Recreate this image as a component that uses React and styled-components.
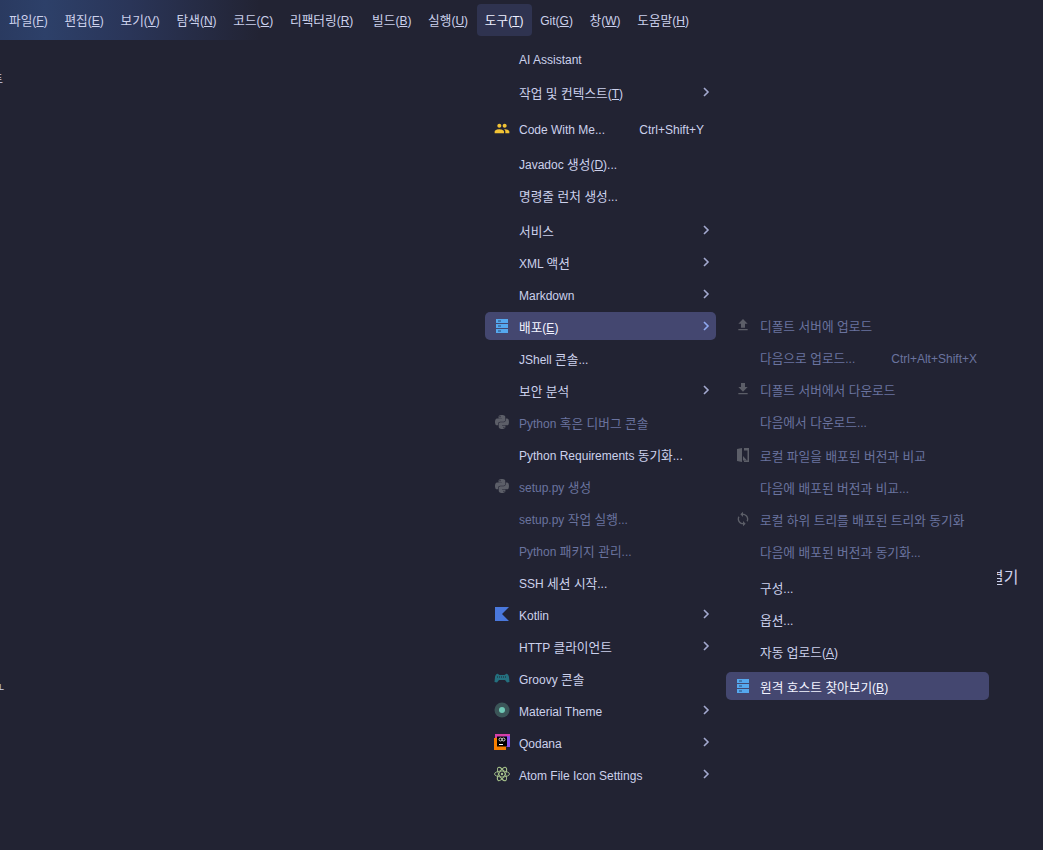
import React from "react";
import styled, { createGlobalStyle } from "styled-components";
import { MdPeople, MdFileUpload, MdFileDownload, MdSync } from "react-icons/md";
import { FaPython } from "react-icons/fa";

const textColor = "#ccd1ec";
const dimColor = "#6a739f";

const GlobalStyle = createGlobalStyle`
    html, body {
        margin: 0;
        background: #222333;
    }
    body {
        font-family: "Liberation Sans", "Noto Sans CJK KR", sans-serif;
        font-size: 12px;
        color: ${textColor};
    }
`;

const Page = styled.div`
    position: relative;
    width: 1043px;
    height: 850px;
    overflow: hidden;
    background: #222333;
`;

const MenuBar = styled.div`
    display: flex;
    align-items: center;
    height: 40px;
    padding-left: 1px;
    background: linear-gradient(90deg, #2a3a60 0%, #2d4069 45px, #2a3558 130px, #222333 260px);
`;

const BarItem = styled.div`
    height: 32px;
    line-height: 35px;
    padding: 0 8px;
    margin-right: 0.7px;
    border-radius: 4px;
    white-space: nowrap;
    background: ${({ $active }) => ($active ? "#2f3350" : "transparent")};
    color: ${({ $active }) => ($active ? "#eef0ff" : textColor)};

    &:nth-child(6) {
        margin-right: 2.7px;
    }
`;

const Hangul = styled.span`
    font-size: 12.7px;
    line-height: 0;
`;

const BackText = styled.span`
    position: absolute;
    left: ${({ $x }) => $x}px;
    top: ${({ $y }) => $y}px;
    color: ${textColor};
    font-size: ${({ $size }) => $size}px;
    line-height: 1;
`;

const Menu = styled.div`
    position: absolute;
    left: ${({ $x }) => $x}px;
    top: ${({ $y }) => $y}px;
    width: ${({ $w }) => $w}px;
    display: flex;
    flex-direction: column;
    padding: 0 8px;
    box-sizing: border-box;
    background: #222333;
`;

const Row = styled.div`
    display: flex;
    align-items: center;
    flex: none;
    height: 28px;
    margin: ${({ $gap }) => 2 + ($gap || 0)}px 0 2px;
    padding: 0 12px 0 9px;
    border-radius: 5px;
    white-space: nowrap;
    background: ${({ $selected }) => ($selected ? "#444770" : "transparent")};
    color: ${({ $selected, $disabled }) =>
        $selected ? "#f2f3ff" : $disabled ? dimColor : textColor};
`;

const IconSlot = styled.span`
    display: flex;
    align-items: center;
    justify-content: center;
    flex: none;
    width: 16px;
    height: 16px;
    margin-right: 9px;
    color: ${({ $color }) => $color || "#5c5e68"};
`;

const Label = styled.span`
    flex: 1;
    line-height: 16px;
    padding-top: 4px;
`;

const Shortcut = styled.span`
    line-height: 16px;
    padding-top: 4px;
    color: ${({ $disabled }) => ($disabled ? dimColor : textColor)};
`;

const Chevron = styled.svg`
    flex: none;
    width: 8px;
    height: 10px;
    margin-right: -6px;
    fill: none;
    stroke: ${({ $selected }) => ($selected ? "#8fa8f0" : "#a3a9cf")};
    stroke-width: 1.6;
`;

const Arrow = ({ selected }) => (
    <Chevron viewBox="0 0 8 10" $selected={selected}>
        <path d="M2 1l4 4-4 4" />
    </Chevron>
);

// "파일(&F)" -> hangul runs get their own size, the letter after & is underlined
const MenuText = ({ text }) =>
    text.split(/([\uAC00-\uD7A3][\uAC00-\uD7A3 ]*|&.)/).map((part, i) => {
        if (!part) return null;
        if (part[0] === "&") return <u key={i}>{part[1]}</u>;
        if (/[\uAC00-\uD7A3]/.test(part)) return <Hangul key={i}>{part}</Hangul>;
        return part;
    });

const ServerIcon = () => (
    <svg width="16" height="16" viewBox="0 0 16 16">
        <rect x="2" y="1" width="12" height="4" fill="#55a8ee" />
        <rect x="2" y="6" width="12" height="4" fill="#55a8ee" />
        <rect x="2" y="11" width="12" height="4" fill="#55a8ee" />
        <rect x="4" y="2.500" width="3" height="1" fill="#2b4a78" />
        <rect x="4" y="7.500" width="3" height="1" fill="#2b4a78" />
        <rect x="4" y="12.500" width="3" height="1" fill="#2b4a78" />
    </svg>
);

const KotlinIcon = () => (
    <svg width="15" height="15" viewBox="0 0 15 15">
        <polygon points="0,0 14,0 7,7 14,14 0,14" fill="#4a78dc" />
    </svg>
);

const GroovyIcon = () => (
    <svg width="16" height="12" viewBox="0 0 16 12">
        <path d="M0.500 10l.5-5c.3-2 2-4 3-3l1.500 1h5l1.500-1c1-1 2.700 1 3 3l.5 5-2.500 .5-2-2.500H5l-2 2.500z" fill="#24707f" />
        <path d="M3 5h10" stroke="#222333" strokeWidth="1.200" strokeDasharray="1 1" />
    </svg>
);

const MaterialIcon = () => (
    <svg width="16" height="16" viewBox="0 0 16 16">
        <circle cx="8" cy="8" r="7.500" fill="#3b5558" />
        <circle cx="8" cy="8" r="3" fill="#70c8b6" />
    </svg>
);

const QodanaIcon = () => (
    <svg width="16" height="16" viewBox="0 0 16 16">
        <rect x="1" y="0" width="15" height="13" fill="#d63fa8" />
        <rect x="10" y="2" width="6" height="11" fill="#8a4fe8" />
        <rect x="0" y="4" width="12" height="12" fill="#f77f00" />
        <rect x="3" y="2.500" width="10" height="10" fill="#000" />
        <circle cx="6.500" cy="5.500" r="1.500" fill="none" stroke="#fff" strokeWidth=".8" />
        <circle cx="9.500" cy="5.500" r="1.500" fill="none" stroke="#fff" strokeWidth=".8" />
        <rect x="5" y="10" width="4" height="1" fill="#fff" />
    </svg>
);

const AtomIcon = () => (
    <svg width="16" height="16" viewBox="0 0 16 16" fill="none" stroke="#a8c48c" strokeWidth=".9">
        <ellipse cx="8" cy="8" rx="7.500" ry="3" />
        <ellipse cx="8" cy="8" rx="7.500" ry="3" transform="rotate(60 8 8)" />
        <ellipse cx="8" cy="8" rx="7.500" ry="3" transform="rotate(120 8 8)" />
        <circle cx="8" cy="8" r="1.200" fill="#a8c48c" stroke="none" />
    </svg>
);

const CompareIcon = () => (
    <svg width="14" height="16" viewBox="0 0 14 16">
        <path d="M1 2l5-1v14l-5-1z" fill="#5c5e68" />
        <path d="M8 1h5v14H8v-1.500h3.500v-10H8z" fill="#5c5e68" />
        <path d="M7 9l4 4.500H7z" fill="#5c5e68" />
    </svg>
);

const barItems = [
    "파일(&F)",
    "편집(&E)",
    "보기(&V)",
    "탐색(&N)",
    "코드(&C)",
    "리팩터링(&R)",
    "빌드(&B)",
    "실행(&U)",
    "도구(&T)",
    "Git(&G)",
    "창(&W)",
    "도움말(&H)",
];

const toolsMenu = [
    { label: "AI Assistant" },
    { label: "작업 및 컨텍스트(&T)", gap: 2, sub: true },
    { label: "Code With Me...", gap: 4, icon: <MdPeople size={17} />, color: "#f2c335", shortcut: "Ctrl+Shift+Y" },
    { label: "Javadoc 생성(&D)...", gap: 3 },
    { label: "명령줄 런처 생성..." },
    { label: "서비스", gap: 3, sub: true },
    { label: "XML 액션", sub: true },
    { label: "Markdown", sub: true },
    { label: "배포(&E)", icon: <ServerIcon />, sub: true, selected: true },
    { label: "JShell 콘솔..." },
    { label: "보안 분석", sub: true },
    { label: "Python 혹은 디버그 콘솔", icon: <FaPython size={16} />, disabled: true },
    { label: "Python Requirements 동기화..." },
    { label: "setup.py 생성", icon: <FaPython size={16} />, disabled: true },
    { label: "setup.py 작업 실행...", disabled: true },
    { label: "Python 패키지 관리...", disabled: true },
    { label: "SSH 세션 시작..." },
    { label: "Kotlin", icon: <KotlinIcon />, sub: true },
    { label: "HTTP 클라이언트", sub: true },
    { label: "Groovy 콘솔", icon: <GroovyIcon /> },
    { label: "Material Theme", icon: <MaterialIcon />, sub: true },
    { label: "Qodana", icon: <QodanaIcon />, sub: true },
    { label: "Atom File Icon Settings", icon: <AtomIcon />, sub: true },
];

const deployMenu = [
    { label: "디폴트 서버에 업로드", icon: <MdFileUpload size={16} />, disabled: true },
    { label: "다음으로 업로드...", shortcut: "Ctrl+Alt+Shift+X", disabled: true },
    { label: "디폴트 서버에서 다운로드", icon: <MdFileDownload size={16} />, disabled: true },
    { label: "다음에서 다운로드...", disabled: true },
    { label: "로컬 파일을 배포된 버전과 비교", gap: 2, icon: <CompareIcon />, disabled: true },
    { label: "다음에 배포된 버전과 비교...", disabled: true },
    { label: "로컬 하위 트리를 배포된 트리와 동기화", icon: <MdSync size={16} />, disabled: true },
    { label: "다음에 배포된 버전과 동기화...", disabled: true },
    { label: "구성...", gap: 4 },
    { label: "옵션..." },
    { label: "자동 업로드(&A)" },
    { label: "원격 호스트 찾아보기(&B)", gap: 3, icon: <ServerIcon />, selected: true },
];

const MenuRows = ({ items }) =>
    items.map((item, i) => (
        <Row key={i} $gap={item.gap} $selected={item.selected} $disabled={item.disabled}>
            <IconSlot $color={item.color}>{item.icon}</IconSlot>
            <Label>
                <MenuText text={item.label} />
            </Label>
            {item.shortcut && <Shortcut $disabled={item.disabled}>{item.shortcut}</Shortcut>}
            {item.sub && <Arrow selected={item.selected} />}
        </Row>
    ));

export default function App() {
    return (
        <Page>
            <GlobalStyle />
            <MenuBar>
                {barItems.map((item) => (
                    <BarItem key={item} $active={item === "도구(&T)"}>
                        <MenuText text={item} />
                    </BarItem>
                ))}
            </MenuBar>
            <BackText $x={-8} $y={74} $size={12}>트</BackText>
            <BackText $x={-1} $y={683} $size={9}>L</BackText>
            <BackText $x={989} $y={570} $size={16}>열기</BackText>
            <Menu $x={477} $y={42} $w={247}>
                <MenuRows items={toolsMenu} />
            </Menu>
            <Menu $x={718} $y={309} $w={279}>
                <MenuRows items={deployMenu} />
            </Menu>
        </Page>
    );
}
